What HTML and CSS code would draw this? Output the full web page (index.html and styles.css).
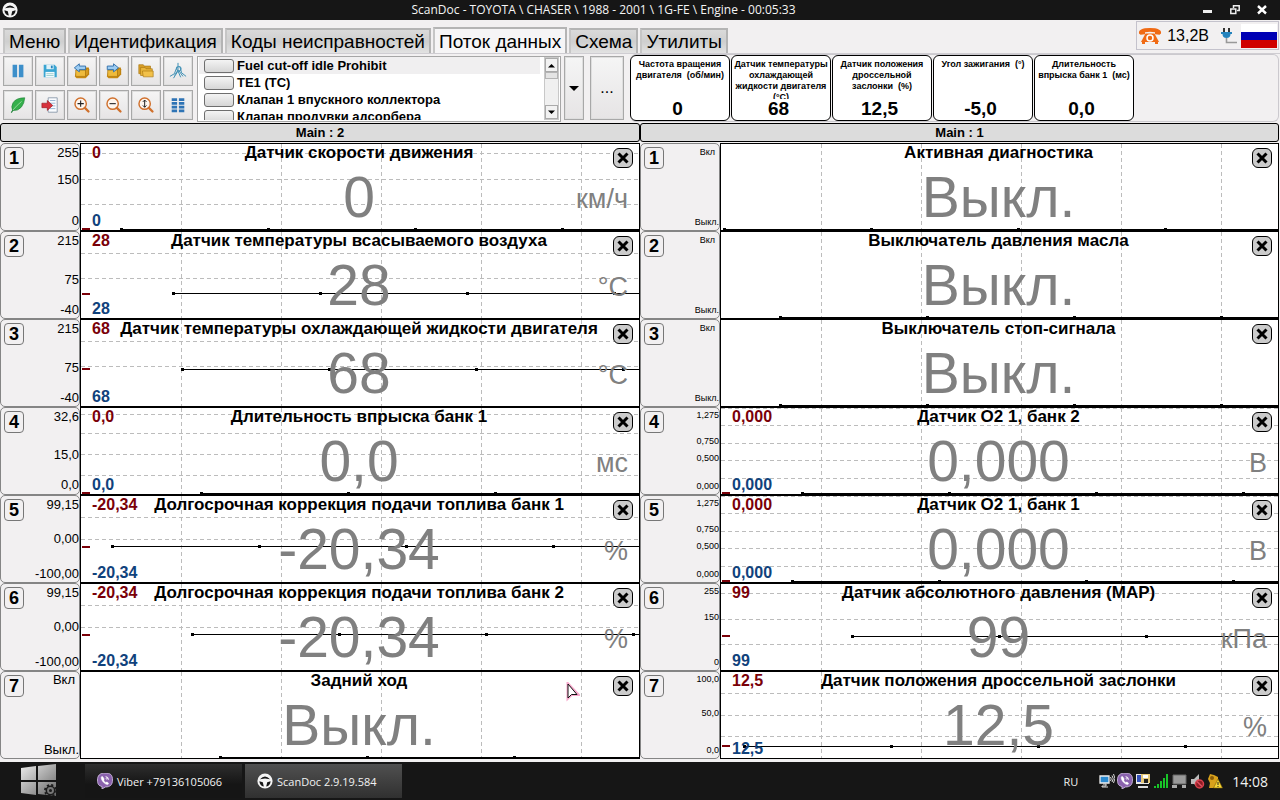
FILE: index.html
```html
<!DOCTYPE html>
<html lang="ru">
<head>
<meta charset="utf-8">
<meta name="viewport" content="width=device-width, initial-scale=1">
<title>ScanDoc</title>
<link rel="stylesheet" href="styles.css">
</head>
<body>
<svg class="defs" aria-hidden="true">
  <symbol id="wheel" viewBox="0 0 16 16">
    <circle cx="8" cy="8" r="7.6" fill="#f4f4f4"/>
    <path d="M3 6.2Q8 .6 13 6.2L8 5.4z" fill="#161616"/>
    <path d="M2.4 8.2l3.4 1 1 4.4A6 6 0 0 1 2.4 8.2zM13.6 8.2l-3.4 1-1 4.4A6 6 0 0 0 13.6 8.2z" fill="#161616"/>
  </symbol>
  <symbol id="viber" viewBox="0 0 16 16">
    <path d="M8 0c5.600 0 7.500 2 7.500 7S13 14 8.500 14L5 16v-2.500C1.500 12.700.5 11 .5 7S2.400 0 8 0z" fill="#8a62ad" stroke="#d9c8ea" stroke-width=".8"/>
    <path d="M4.800 3.500c-1.600 1 .2 4.400 2 6.100 1.900 1.700 4 2.800 4.700 1.200.4-.8-1.700-2.200-2.300-1.500-.6.700-2.900-1.700-2.300-2.400.8-.8-1.100-3.800-2.100-3.400zM8.500 3.500q3 .2 3.200 3.400M8.500 5.300q1.500.1 1.600 1.500" fill="#fff" stroke="#fff" stroke-width=".5"/>
  </symbol>
  <symbol id="stack" viewBox="0 0 20 20">
    <path d="M6 6h11l1 2v6l-4 4H4l-2-2 2-8z" fill="#c98a12"/>
    <path d="M3 9h11v7H4q-1 0-1-1z" fill="#efbb3c" stroke="#a8720c" stroke-width=".7"/>
    <path d="M14 9l3-2.500v7L14 16z" fill="#d99d20" stroke="#a8720c" stroke-width=".6"/>
  </symbol>
  <symbol id="lens" viewBox="0 0 20 20">
    <circle cx="8.500" cy="8.500" r="6.300" fill="#fdf6ef" stroke="#d0702c" stroke-width="1.600"/>
    <path d="M13.200 13.200l4 4" stroke="#d0702c" stroke-width="2.600" stroke-linecap="round"/>
  </symbol>
</svg>

<header class="titlebar">
  <svg class="logo"><use href="#wheel"/></svg>
  <h1>ScanDoc - TOYOTA \ CHASER \ 1988 - 2001 \ 1G-FE \ Engine - 00:05:33</h1>
  <div class="window-buttons">
    <button aria-label="Свернуть"><svg viewBox="0 0 10 10"><path d="M0 5h9v3H0z" fill="#eee"/></svg></button>
    <button aria-label="Восстановить"><svg viewBox="0 0 10 10"><path d="M3.500 3V.8h5.700v4.700H7M.8 4h5v4.500h-5z" fill="none" stroke="#eee" stroke-width="1.500"/></svg></button>
    <button aria-label="Закрыть"><svg viewBox="0 0 10 10"><path d="M1 1l8 7.500M9 1L1 8.500" stroke="#fff" stroke-width="2.400"/></svg></button>
  </div>
</header>

<div class="topline">
  <nav class="tabs">
    <button>Меню</button>
    <button>Идентификация</button>
    <button>Коды неисправностей</button>
    <button class="active">Поток данных</button>
    <button>Схема</button>
    <button>Утилиты</button>
  </nav>
  <div class="status">
    <svg class="phone" viewBox="0 0 24 18">
      <path d="M1 6.500Q0 1 12 1t11 5.500l-1.500 1.300-4.500-.6V5.300Q12 4 7 5.300v1.900l-4.500.6z" fill="#f06a14"/>
      <path d="M7.500 6.500h9l4.500 8.500H3z" fill="#f06a14"/>
      <path d="M4 15h3v2H4zM17 15h3v2h-3z" fill="#f06a14"/>
      <circle cx="12" cy="11" r="3" fill="#f06a14" stroke="#fff" stroke-width="1.500"/>
    </svg>
    <span class="voltage">13,2В</span>
    <svg class="plug" viewBox="0 0 18 18">
      <path d="M4 1v4M9 1v4" stroke="#333" stroke-width="2"/>
      <path d="M1 5h11v2h-1.500q0 4-4 4t-4-4H1z" fill="#2583bd"/>
      <path d="M6.500 11v4.500H17" fill="none" stroke="#999" stroke-width="1.600"/>
    </svg>
    <svg class="flag" viewBox="0 0 36 24" preserveAspectRatio="none"><path d="M0 0h36v8H0z" fill="#fff"/><path d="M0 8h36v8H0z" fill="#0000b4"/><path d="M0 16h36v8H0z" fill="#d00000"/></svg>
  </div>
</div>

<div class="toolbar">
  <div class="tools">
    <button aria-label="Пауза"><svg viewBox="0 0 20 20"><path d="M4 3h5v14H4zM11 3h5v14h-5z" fill="#3d8fca"/></svg></button>
    <button aria-label="Сохранить"><svg viewBox="0 0 20 20"><path d="M3 3h12l2.500 2.500V17H3z" fill="#3aa5d2"/><path d="M6 3h8v5H6z" fill="#dff1f8"/><path d="M11 4h2v3h-2z" fill="#2583bd"/><path d="M5 11h10v6H5z" fill="#f2fafd"/><path d="M6 13h8M6 15h8" stroke="#9cc"/></svg></button>
    <button aria-label="Назад"><svg viewBox="0 0 20 20"><use href="#stack"/><path d="M1.500 6.500L7 2v2.500h7v4H7V11z" fill="#9cccf2" stroke="#2c6ca8"/></svg></button>
    <button aria-label="Вперёд"><svg viewBox="0 0 20 20"><use href="#stack"/><path d="M15 6.500L9.500 2v2.500h-7v4h7V11z" fill="#9cccf2" stroke="#2c6ca8"/></svg></button>
    <button aria-label="Папка"><svg viewBox="0 0 20 20"><path d="M2 3h5l1 1.500h7V13H2z" fill="#d9a02a" stroke="#a8740e" stroke-width=".7"/><path d="M4 6h5l1 1.500h7V15H4z" fill="#e9b63c" stroke="#a8740e" stroke-width=".7"/><path d="M6 10h12v6.500H7z" fill="#f2c14a" stroke="#a8740e" stroke-width=".7"/></svg></button>
    <button aria-label="Графики"><svg viewBox="0 0 20 20" fill="none" stroke="#3d8fb4" stroke-width="1.100"><path d="M10 1v8l-4 6M10.500 9l5 7M1 16l5-3 3-8M12 5l2 7 5 4M5 18l5-8 3 7"/><circle cx="11" cy="7.500" r="2.500"/></svg></button>
    <button aria-label="Эко"><svg viewBox="0 0 20 20"><path d="M17.500 2Q8 2 4.500 7.500 2 12 4 16q6 1 10-4 3-4 3.500-10z" fill="#35b04c" stroke="#1c8035" stroke-width=".7"/><path d="M2.500 18.500L4.500 15.500" stroke="#1c8035" stroke-width="1.200"/><path d="M4.500 15.500Q9 10 14 6" fill="none" stroke="#b4e6b4" stroke-width=".8"/></svg></button>
    <button aria-label="Экспорт"><svg viewBox="0 0 20 20"><path d="M8 2h10v16H8z" fill="#fafcff" stroke="#8a98aa"/><path d="M10 5h6M10 8h6M12 11h4M10 14h6" stroke="#8fb0d0"/><path d="M1 8h6V5l6 5.500L7 16v-3H1z" fill="#d8323c" stroke="#97141c" stroke-width=".7"/></svg></button>
    <button aria-label="Увеличить"><svg viewBox="0 0 20 20"><use href="#lens"/><path d="M5 8.500h7M8.500 5v7" stroke="#222" stroke-width="1.200"/></svg></button>
    <button aria-label="Уменьшить"><svg viewBox="0 0 20 20"><use href="#lens"/><path d="M5 8.500h7" stroke="#222" stroke-width="1.200"/></svg></button>
    <button aria-label="Масштаб по высоте"><svg viewBox="0 0 20 20"><use href="#lens"/><path d="M8.500 4.500v8M6.500 6.500l2-2 2 2M6.500 10.500l2 2 2-2" fill="none" stroke="#222" stroke-width="1.100"/></svg></button>
    <button aria-label="Таблица"><svg viewBox="0 0 20 20"><path d="M3 2.500h6v3H3zM11 2.500h6v3h-6zM3 6.700h6v3H3zM11 6.700h6v3h-6zM3 10.900h6v3H3zM11 10.900h6v3h-6zM3 15.100h6v3H3zM11 15.100h6v3h-6z" fill="#2f74b5"/></svg></button>
  </div>
  <div class="switches">
    <ul>
      <li class="selected"><button id="sw1"></button><label for="sw1">Fuel cut-off idle Prohibit</label></li>
      <li><button id="sw2"></button><label for="sw2">TE1 (TC)</label></li>
      <li><button id="sw3"></button><label for="sw3">Клапан 1 впускного коллектора</label></li>
      <li><button id="sw4"></button><label for="sw4">Клапан продувки адсорбера</label></li>
    </ul>
    <div class="scroll">
      <button aria-label="Вверх"><svg viewBox="0 0 7 5"><path d="M0 4.500L3.500 1 7 4.500z"/></svg></button>
      <span class="thumb"></span>
      <button class="down" aria-label="Вниз"><svg viewBox="0 0 7 5"><path d="M0 .5L3.500 4 7 .5z"/></svg></button>
    </div>
  </div>
  <button class="tall arrow" aria-label="Развернуть список"><svg viewBox="0 0 10 5"><path d="M0 0h10L5 5z"/></svg></button>
  <button class="tall more">...</button>
  <div class="gauges">
    <article><h2>Частота вращения двигателя &nbsp;(об/мин)</h2><p>0</p></article>
    <article><h2>Датчик температуры охлаждающей жидкости двигателя (°C)</h2><p>68</p></article>
    <article><h2>Датчик положения дроссельной заслонки &nbsp;(%)</h2><p>12,5</p></article>
    <article><h2>Угол зажигания &nbsp;(°)</h2><p>-5,0</p></article>
    <article><h2>Длительность впрыска банк 1 &nbsp;(мс)</h2><p>0,0</p></article>
  </div>
</div>

<main class="panels">
  <section class="panel">
    <h2>Main : 2</h2>
    <div class="rows" id="main2"></div>
  </section>
  <section class="panel compact">
    <h2>Main : 1</h2>
    <div class="rows" id="main1"></div>
  </section>
  <svg class="pointer" viewBox="0 0 14 20"><path d="M2 2v14l3.500-3.500H12z" fill="#fff" stroke="#f7a8cc" stroke-width="3"/><path d="M2 2v14l3.500-3.500H11z" fill="#fff" stroke="#111"/></svg>
</main>

<footer class="taskbar">
  <button class="start" aria-label="Пуск">
    <svg viewBox="0 0 38 34">
      <defs><linearGradient id="metal" x2="1" y2="1"><stop stop-color="#eee"/><stop offset="1" stop-color="#666"/></linearGradient></defs>
      <path d="M1 4l15-2v14H1zM18 2l18-2v16H18zM1 18h15v13L1 29zM18 18h18v14l-18-2z" fill="url(#metal)"/>
      <circle cx="30.500" cy="26.500" r="4.200" fill="#777" stroke="#1b1b1b" stroke-width="1.500"/><circle cx="30.500" cy="26.500" r="1.500" fill="#1b1b1b"/>
      <circle cx="30.500" cy="26.500" r="5.600" fill="none" stroke="#1b1b1b" stroke-width="1.700" stroke-dasharray="2.200 2.200"/>
    </svg>
  </button>
  <button class="task"><svg><use href="#viber"/></svg>Viber +79136105066</button>
  <button class="task current"><svg><use href="#wheel"/></svg>ScanDoc 2.9.19.584</button>
  <div class="tray">
    <span class="lang">RU</span>
    <div class="tray-icons">
      <svg viewBox="0 0 16 16"><path d="M1 3h9v7H1z" fill="#2a8ad0" stroke="#eee" stroke-width="1.300"/><path d="M4 11h3v2H3v1h6" stroke="#ddd" fill="none"/><path d="M11.500 4q1.500 2 0 4M13 2.500q2.500 3.300 0 6.500M14.500 1q3 4.500 0 9" stroke="#ddd" fill="none"/></svg>
      <svg viewBox="0 0 16 16"><use href="#viber"/></svg>
      <svg viewBox="0 0 16 16"><path d="M1 1h13v10H1z" fill="#e8e8e8"/><path d="M2 2h8v7H2z" fill="#3450b8"/><path d="M6 1h9v9H6z" fill="#e6c878"/><path d="M8 2h5v3H8z" fill="#fff"/><path d="M9 6h4v4H9z" fill="#222"/><path d="M3 13h10v2H3z" fill="#ddd"/></svg>
      <svg viewBox="0 0 16 16"><path d="M1 13h2v2H1zM4 11h2v4H4zM7 8h2v7H7zM10 5h2v10h-2zM13 1h2v14h-2z" fill="#18c428"/></svg>
      <svg viewBox="0 0 16 16"><path d="M2 2h13v9H2z" fill="#9a9a9a" stroke="#666"/><path d="M1 12h5v3H1zM11 12h4v3h-4z" fill="#aaa"/></svg>
      <svg viewBox="0 0 16 16"><path d="M2 6h3l5-5v14l-5-4H2z" fill="#bbb"/><circle cx="10.500" cy="11" r="4" fill="#8c1c24" stroke="#d8404c" stroke-width="1.500"/><path d="M8 8.500l5 5" stroke="#e05060" stroke-width="1.500"/></svg>
      <svg viewBox="0 0 16 16"><path d="M3 1l4 1 4 2v5l3 3-3 3H2l1-5L1 6z" fill="#d9a21c"/><circle cx="5" cy="5" r="2" fill="#8a5c08"/><path d="M11 6l4.500 9h-9z" fill="#f8d838" stroke="#7a5c00" stroke-width=".6"/><path d="M11 9v3M11 13v1" stroke="#222"/></svg>
    </div>
    <time>14:08</time>
  </div>
</footer>
<script src="app.js"></script>
</body>
</html>
```

FILE: styles.css
```css
* { box-sizing: border-box; }

body {
  margin: 0;
  min-height: 100vh;
  display: flex;
  flex-direction: column;
  background: #f2f0f1;
  color: #000;
  font-family: "Liberation Sans", Arial, sans-serif;
  font-size: 13px;
}

h1, h2, p, ul { margin: 0; padding: 0; }
ul { list-style: none; }
button { font: inherit; color: inherit; padding: 0; margin: 0; border: 0; background: none; }
svg { display: block; flex: none; }
.defs { position: absolute; width: 0; height: 0; }

.titlebar {
  display: grid;
  grid-template-columns: 90px 1fr 90px;
  align-items: center;
  height: 20px;
  background: #161616;
  color: #f4f4f4;
}
.logo { width: 16px; height: 16px; margin-left: 2px; }
.titlebar h1 {
  font: 12px/20px "Open Sans", "Noto Sans", sans-serif;
  text-align: center;
  padding-right: 73px;
}
.window-buttons { display: flex; justify-content: flex-end; gap: 2px; padding-right: 6px; }
.window-buttons button { width: 25px; height: 17px; display: grid; place-items: center; }
.window-buttons svg { width: 10px; height: 10px; }

.topline {
  display: flex;
  justify-content: space-between;
  height: 33px;
  padding: 0 1px 0 3px;
}
.tabs { display: flex; align-items: flex-end; gap: 2px; }
.tabs button {
  height: 25px;
  padding: 0 4px;
  border: 2px solid #b4b4b4;
  border-bottom: 0;
  border-left-color: #c6c6c6;
  background: linear-gradient(#dadada, #cfcfcf 50%, #e2e2e2);
  font-size: 19px;
  line-height: 23px;
  white-space: nowrap;
}
.tabs .active { height: 26px; background: #f6f5f6; }
.status {
  display: flex;
  align-items: center;
  margin: 1px 0 3px;
  padding: 0 1px;
  border: 1px solid #c4c2cc;
}
.phone { width: 24px; height: 18px; }
.voltage { padding: 0 11px 0 5px; font-size: 16px; }
.plug { width: 18px; height: 18px; margin-right: 3px; }
.flag { width: 36px; height: 24px; }

.toolbar { display: flex; height: 70px; padding: 2px 1px 1px 3px; border-top: 1px solid #cfcdd2; }
.tools {
  display: grid;
  grid-template-columns: repeat(6, 30px);
  grid-template-rows: 30px 30px;
  gap: 4px 2px;
}
.tools button, .tall {
  display: grid;
  place-items: center;
  border: 1px solid #a8a8a8;
  box-shadow: inset 0 0 0 1px #dedede;
  background: linear-gradient(#f5f5f5, #e6e4e5);
}
.tools svg { width: 18px; height: 18px; }
.switches {
  display: flex;
  width: 364px;
  height: 66px;
  margin-left: 4px;
  padding: 0 1px 1px;
  border: 1px solid #a6a6a6;
  background: #fff;
}
.switches ul { flex: 1; overflow: hidden; }
.switches li { display: flex; align-items: center; height: 17px; padding-left: 5px; gap: 3px; margin-right: 4px; }
.switches .selected { background: #f0eff0; }
.switches li button {
  width: 30px;
  height: 14px;
  border: 1px solid #6e6e6e;
  border-radius: 3px;
  background: linear-gradient(#f4f4f4, #d6d6d6);
}
.switches label { font-weight: 700; white-space: nowrap; }
.scroll { display: flex; flex-direction: column; width: 15px; border: 1px solid #c8c8c8; background: #f0f0f0; }
.scroll button { height: 14px; display: grid; place-items: center; border: 1px solid #aaa; background: #f2f2f2; }
.scroll svg { width: 7px; height: 5px; }
.thumb { height: 7px; border: 1px solid #b4b4b4; background: #e4e4e4; }
.scroll .down { margin-top: auto; }
.tall { width: 20px; height: 64px; margin-left: 3px; }
.arrow svg { width: 10px; height: 5px; }
.more { width: 34px; margin-left: 6px; font-size: 16px; }
.gauges {
  flex: 1;
  display: flex;
  gap: 1px;
  margin: -2px 0 0 6px;
  border: 1px solid #cbc9ce;
  border-left: 0;
  border-radius: 6px;
}
.gauges article {
  display: flex;
  flex-direction: column;
  justify-content: space-between;
  width: 100px;
  height: 66px;
  padding: 3px 1px 1px;
  border: 1px solid #000;
  border-radius: 6px;
  background: #fff;
  text-align: center;
}
.gauges h2 { height: 40px; overflow: hidden; font-size: 9px; line-height: 11px; }
.gauges p { padding-right: 5px; font-size: 19px; line-height: 20px; font-weight: 700; }

.panels {
  position: relative;
  flex: 1;
  display: grid;
  grid-template-columns: 1fr 1fr;
  margin-bottom: 3px;
}
.panel { display: flex; flex-direction: column; min-width: 0; }
.panel > h2 {
  height: 19px;
  margin-bottom: 1px;
  border: 1px solid #000;
  border-radius: 3px;
  background: #dcdcdc;
  font-size: 13px;
  line-height: 17px;
  text-align: center;
}
.compact { margin-right: 1px; }
.rows { flex: 1; display: grid; grid-auto-rows: 1fr; }
.row { display: grid; grid-template-columns: 80px 1fr; min-height: 88px; }
.side {
  position: relative;
  border: 1px solid #858585;
  border-radius: 5px;
}
.side button {
  position: absolute;
  left: 3px;
  top: 3px;
  width: 20px;
  height: 22px;
  border: 1px solid #777;
  border-radius: 4px;
  font-size: 18px;
  line-height: 20px;
  font-weight: 700;
}
.tick {
  position: absolute;
  right: 0;
  font-size: 13px;
  line-height: 14px;
  transform: translateY(-50%);
}
.compact .tick { font-size: 9px; }
.tick.on { right: 4px; }
.plot {
  position: relative;
  display: grid;
  grid-template-rows: 1fr;
  min-width: 0;
  border: 1px solid #000;
  background: #fff;
}
.plot > * { grid-area: 1 / 1; position: relative; }
.plot > .chart {
  position: absolute;
  inset: 0;
  width: 100%;
  height: 100%;
  overflow: visible;
  shape-rendering: crispEdges;
}
.grid { stroke: #bcbcbc; stroke-dasharray: 4 3; }
.trace { stroke: #000; }
.mark { stroke: #7a0008; stroke-width: 2; }
.title { justify-self: center; font-size: 17px; line-height: 18px; padding-right: 2px; white-space: nowrap; }
.value, .unit { align-self: center; color: #808080; }
.value { justify-self: center; font-size: 57px; line-height: 64px; padding: 19px 2px 0 0; }
.unit { justify-self: end; font-size: 27px; line-height: 32px; padding: 24px 11px 0 0; }
.max, .min { justify-self: start; padding-left: 11px; font-size: 16px; line-height: 18px; font-weight: 700; }
.max { color: #7a0008; }
.min { align-self: end; color: #10427c; }
.close {
  justify-self: end;
  width: 20px;
  height: 20px;
  margin: 4px 6px 0 0;
  display: grid;
  place-items: center;
  border: 1px solid #000;
  border-radius: 6px;
  background: #cbcbcb;
}
.close svg { width: 12px; height: 12px; }
.pointer { position: absolute; left: 566px; top: 559px; width: 14px; height: 20px; }

.taskbar {
  display: flex;
  gap: 3px;
  height: 38px;
  background: #161616;
  color: #f2f2f2;
  font-family: "Open Sans", "Noto Sans", sans-serif;
}
.start { width: 82px; padding-left: 20px; }
.start svg { width: 38px; height: 34px; }
.task {
  display: flex;
  align-items: center;
  gap: 4px;
  width: 157px;
  height: 34px;
  margin-top: 2px;
  padding-left: 12px;
  background: linear-gradient(#2e2e2e, #151515 60%);
  font-size: 11px;
  white-space: nowrap;
}
.task.current { background: linear-gradient(#505050, #303030); }
.task svg { width: 16px; height: 16px; }
.tray { display: flex; align-items: center; margin-left: auto; padding-right: 12px; }
.lang { font-size: 11px; padding-right: 21px; }
.tray-icons { display: flex; gap: 2px; }
.tray-icons svg { width: 16px; height: 16px; }
.tray time { padding-left: 9px; font-size: 14px; }
```

FILE: app.js
```js
const INNER_HEIGHT = 86;
const GRID_STEP = 100;
const SAMPLE_STEP = 147;
const OFF = "Выкл.";

// ticks: [label, y], grid: y of each horizontal line, start / level: first sample x and signal y
const switchTicks = [["Вкл", 9, "on"], [OFF, 79]];
const speedTicks = [["255", 10], ["150", 37], ["0", 78]];
const tempTicks = [["215", 10], ["75", 49], ["-40", 79]];
const trimTicks = [["99,15", 10], ["0,00", 44], ["-100,00", 79]];
const o2Ticks = [["1,275", 8], ["0,750", 34], ["0,500", 51], ["0,000", 79]];

const panels = {
  main2: [
    { title: "Датчик скорости движения", value: "0", unit: "км/ч", ticks: speedTicks, grid: [10, 36, 62], start: 40, level: 86 },
    { title: "Датчик температуры всасываемого воздуха", value: "28", unit: "°C", ticks: tempTicks, grid: [22, 48], start: 92, level: 63 },
    { title: "Датчик температуры охлаждающей жидкости двигателя", value: "68", unit: "°C", ticks: tempTicks, grid: [22, 48], start: 101, level: 50 },
    { title: "Длительность впрыска банк 1", value: "0,0", unit: "мс", ticks: [["32,6", 10], ["15,0", 48], ["0,0", 78]], grid: [7, 27, 48, 68], start: 120, level: 86 },
    { title: "Долгосрочная коррекция подачи топлива банк 1", value: "-20,34", unit: "%", ticks: trimTicks, grid: [22, 44], start: 31, level: 52 },
    { title: "Долгосрочная коррекция подачи топлива банк 2", value: "-20,34", unit: "%", ticks: trimTicks, grid: [22, 44], start: 111, level: 52 },
    { title: "Задний ход", value: OFF, ticks: switchTicks, grid: [], start: 139, level: 86 }
  ],
  main1: [
    { title: "Активная диагностика", value: OFF, ticks: switchTicks, grid: [], start: 3, level: 86 },
    { title: "Выключатель давления масла", value: OFF, ticks: switchTicks, grid: [], start: 59, level: 86 },
    { title: "Выключатель стоп-сигнала", value: OFF, ticks: switchTicks, grid: [], start: 59, level: 86 },
    { title: "Датчик O2 1, банк 2", value: "0,000", unit: "В", ticks: o2Ticks, grid: [2, 19, 36, 53, 71], start: 81, level: 86 },
    { title: "Датчик O2 1, банк 1", value: "0,000", unit: "В", ticks: o2Ticks, grid: [2, 19, 36, 53, 71], start: 71, level: 86 },
    { title: "Датчик абсолютного давления (MAP)", value: "99", unit: "кПа", ticks: [["255", 8], ["150", 34], ["0", 79]], grid: [10, 36, 62], start: 131, level: 53 },
    { title: "Датчик положения дроссельной заслонки", value: "12,5", unit: "%", ticks: [["100,0", 8], ["50,0", 42], ["0,0", 79]], grid: [22, 44, 66], start: 23, level: 75 }
  ]
};

// y counts from the outer edge of the row's 1px border
const percent = y => ((y - 1) / INNER_HEIGHT * 100).toFixed(2) + "%";

function chart(sensor, width) {
  const level = percent(sensor.level);
  let s = "";
  for (const y of sensor.grid) {
    s += `<line class="grid" x1="0" x2="100%" y1="${percent(y)}" y2="${percent(y)}"/>`;
  }
  for (let x = GRID_STEP; x < width; x += GRID_STEP) {
    s += `<line class="grid" x1="${x}" x2="${x}" y1="0" y2="100%"/>`;
  }
  s += `<line class="trace" x1="${sensor.start}" x2="100%" y1="${level}" y2="${level}"/>`;
  for (let x = sensor.start; x < width; x += SAMPLE_STEP) {
    s += `<line class="trace" stroke-width="3" x1="${x - 1}" x2="${x + 2}" y1="${level}" y2="${level}"/>`;
  }
  if (sensor.unit) {
    s += `<line class="mark" x1="1" x2="9" y1="${level}" y2="${level}"/>`;
  }
  return `<svg class="chart">${s}</svg>`;
}

function row(sensor, index, width) {
  const ticks = sensor.ticks.map(([text, y, kind]) =>
    `<span class="tick ${kind || ""}" style="top:${percent(y)}">${text}</span>`).join("");
  const numeric = sensor.unit
    ? `<span class="unit">${sensor.unit}</span><span class="max">${sensor.value}</span><span class="min">${sensor.value}</span>`
    : "";
  return `<article class="row">
    <div class="side"><button>${index + 1}</button>${ticks}</div>
    <div class="plot">${chart(sensor, width)}
      <h2 class="title">${sensor.title}</h2>
      <span class="value">${sensor.value}</span>${numeric}
      <button class="close" aria-label="Убрать"><svg viewBox="0 0 12 12"><path d="M1.500 1.500l9 9M10.500 1.500l-9 9" stroke="#000" stroke-width="3"/></svg></button>
    </div>
  </article>`;
}

function render() {
  for (const [id, sensors] of Object.entries(panels)) {
    const box = document.getElementById(id);
    const width = box.clientWidth - 82;
    box.innerHTML = sensors.map((sensor, i) => row(sensor, i, width)).join("");
  }
}

render();
window.addEventListener("resize", render);
```
